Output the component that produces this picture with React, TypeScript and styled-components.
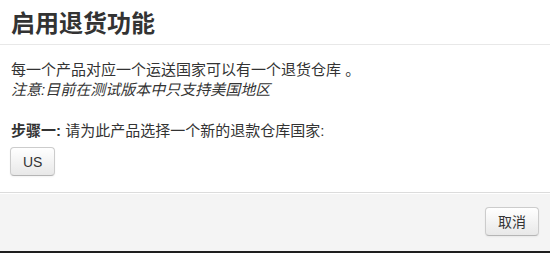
import React from "react";
import styled, { createGlobalStyle } from "styled-components";

const GlobalStyle = createGlobalStyle`
  html, body {
    margin: 0;
    padding: 0;
    background: #1e1e1e;
  }
  body {
    font-family: "Liberation Sans", "Noto Sans CJK SC", sans-serif;
    color: #333;
  }
`;

const Modal = styled.div`
  width: 550px;
  height: 251px;
  background: #fff;
  display: flex;
  flex-direction: column;
  box-sizing: border-box;
`;

const Header = styled.div`
  height: 45px;
  box-sizing: border-box;
  padding: 0 11px;
  border-bottom: 1px solid #e8e8e8;
  display: flex;
  align-items: center;
`;

const Title = styled.h3`
  margin: 0;
  font-family: "Noto Sans CJK SC", sans-serif;
  font-size: 24px;
  line-height: 30px;
  font-weight: 700;
  color: #333;
`;

const Body = styled.div`
  flex: 1;
  padding: 15px 11px 0;
  font-family: "Liberation Sans", "Noto Sans CJK SC", sans-serif;
  font-size: 15px;
  line-height: 20px;
`;

const Para = styled.p<{ $gap?: number }>`
  margin: 0 0 ${(p) => p.$gap ?? 0}px;
`;

const Note = styled.em`
  font-style: italic;
`;

const Strong = styled.strong`
  font-weight: 700;
`;

const Button = styled.button`
  height: 29px;
  padding: 0 12px;
  font-family: "Liberation Sans", "Noto Sans CJK SC", sans-serif;
  font-size: 14px;
  line-height: 20px;
  color: #333;
  background: linear-gradient(#ffffff, #e8e8e8);
  border: 1px solid #cccccc;
  border-bottom-color: #b5b5b5;
  border-radius: 4px;
  box-shadow: inset 0 1px 0 rgba(255, 255, 255, 0.2), 0 1px 2px rgba(0, 0, 0, 0.05);
  cursor: pointer;
`;

const CountryRow = styled.div`
  margin-top: 6px;
  margin-left: -1px;
`;

const Footer = styled.div`
  border-top: 1px solid #dcdcdc;
  background: #f4f4f4;
  box-shadow: inset 0 1px 0 #ffffff;
  padding: 14px 11px 15px;
  display: flex;
  justify-content: flex-end;
`;

export default function App() {
  return (
    <>
      <GlobalStyle />
      <Modal>
        <Header>
          <Title>启用退货功能</Title>
        </Header>
        <Body>
          <Para>每一个产品对应一个运送国家可以有一个退货仓库 。</Para>
          <Para $gap={21}>
            <Note>注意:目前在测试版本中只支持美国地区</Note>
          </Para>
          <Para>
            <Strong>步骤一:</Strong> 请为此产品选择一个新的退款仓库国家:
          </Para>
          <CountryRow>
            <Button>US</Button>
          </CountryRow>
        </Body>
        <Footer>
          <Button>取消</Button>
        </Footer>
      </Modal>
    </>
  );
}
